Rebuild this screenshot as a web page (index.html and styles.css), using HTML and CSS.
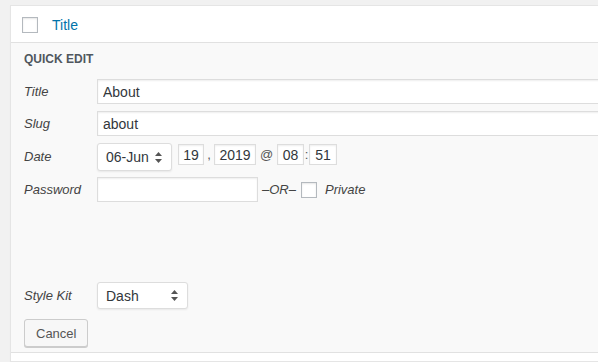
FILE: index.html
```html
<!DOCTYPE html>
<html lang="en">
<head>
    <meta charset="UTF-8">
    <title>Quick Edit</title>
    <link rel="stylesheet" href="styles.css">
</head>
<body>

    <div class="list">

        <div class="list-head">
            <span class="check"></span>
            <a class="col-title" href="#">Title</a>
        </div>

        <div class="quick-edit">
            <div class="legend">Quick Edit</div>

            <div class="field row-title">
                <span class="label">Title</span>
                <input class="text wide" type="text" value="About">
            </div>

            <div class="field row-slug">
                <span class="label">Slug</span>
                <input class="text wide" type="text" value="about">
            </div>

            <div class="field row-date">
                <span class="label">Date</span>
                <div class="select month">
                    <span>06-Jun</span>
                    <svg class="arrows" width="7" height="11" viewBox="0 0 7 11"><path d="M3.5 0 L7 4 L0 4 Z M0 7 L7 7 L3.5 11 Z" fill="#555"/></svg>
                </div>
                <div class="date-parts">
                    <input class="text small day" type="text" value="19">
                    <span class="sep">,</span>
                    <input class="text small year" type="text" value="2019">
                    <span class="sep at">@</span>
                    <input class="text small hour" type="text" value="08">
                    <span class="sep colon">:</span>
                    <input class="text small minute" type="text" value="51">
                </div>
            </div>

            <div class="field row-password">
                <span class="label">Password</span>
                <input class="text password" type="text" value="">
                <span class="or">&ndash;OR&ndash;</span>
                <span class="check private-check"></span>
                <span class="private">Private</span>
            </div>

            <div class="field row-kit">
                <span class="label">Style Kit</span>
                <div class="select kit">
                    <span>Dash</span>
                    <svg class="arrows" width="7" height="11" viewBox="0 0 7 11"><path d="M3.5 0 L7 4 L0 4 Z M0 7 L7 7 L3.5 11 Z" fill="#555"/></svg>
                </div>
            </div>

            <div class="actions">
                <button class="button">Cancel</button>
            </div>
        </div>

        <div class="list-foot"></div>
    </div>

</body>
</html>
```

FILE: styles.css
```css
* {
    margin: 0;
    padding: 0;
    box-sizing: border-box;
    font-family: 'Liberation Sans', Arial, sans-serif;
}

html, body {
    overflow: hidden;
}

body {
    background: #f1f1f1;
    color: #444;
    font-size: 13px;
}

.list {
    width: 820px;
    margin: 5px 0 0 10px;
    border: 1px solid #e5e5e5;
    box-shadow: 0 1px 1px rgba(0, 0, 0, 0.04);
    background: #fff;
}

/* header row */

.list-head {
    height: 37px;
    padding: 11px 0 0 11px;
    display: flex;
    align-items: flex-start;
    background: #fff;
    border-bottom: 1px solid #e1e1e1;
}

.check {
    display: inline-block;
    width: 16px;
    height: 16px;
    border: 1px solid #b4b9be;
    background: #fff;
    box-shadow: inset 0 1px 2px rgba(0, 0, 0, 0.1);
}

.col-title {
    margin-left: 14px;
    color: #0073aa;
    font-size: 14px;
    line-height: 16px;
    text-decoration: none;
}

/* quick edit panel */

.quick-edit {
    background: #f9f9f9;
    padding: 8px 0 5px 13px;
    border-bottom: 1px solid #e1e1e1;
}

.legend {
    font-size: 12px;
    font-weight: bold;
    line-height: 16px;
    text-transform: uppercase;
    color: #50575e;
}

.field {
    display: flex;
    align-items: center;
}

.label {
    width: 73px;
    flex-shrink: 0;
    font-style: italic;
    font-size: 13px;
    color: #444;
}

.row-title { margin-top: 12px; }
.row-slug { margin-top: 7px; }
.row-date { margin-top: 7px; align-items: flex-start; }
.row-date .label { line-height: 28px; }
.row-password { margin-top: 6px; }
.row-kit { margin-top: 80px; }

.text {
    height: 25px;
    padding: 0 5px;
    border: 1px solid #ddd;
    background: #fff;
    box-shadow: inset 0 1px 2px rgba(0, 0, 0, 0.07);
    color: #32373c;
    font-size: 14px;
    outline: none;
}

.wide {
    flex: 1;
    margin-right: 40px;
}

.select {
    display: flex;
    align-items: center;
    justify-content: space-between;
    height: 28px;
    padding: 0 9px 0 8px;
    border: 1px solid #ddd;
    border-radius: 3px;
    background: #fff;
    box-shadow: 0 1px 2px rgba(0, 0, 0, 0.07);
    color: #32373c;
    font-size: 14px;
}

.month { width: 75px; }
.kit { width: 91px; height: 27px; }

.date-parts {
    display: flex;
    align-items: center;
    margin: 1px 0 0 6px;
}

.small {
    height: 21px;
    padding: 0;
    text-align: center;
}

.day { width: 26px; }
.year { width: 42px; }
.hour { width: 27px; }
.minute { width: 28px; }

.sep {
    width: 10px;
    text-align: center;
    font-size: 13px;
    color: #555;
}

.sep.at { width: 21px; }
.sep.colon { width: 5px; }

.password { width: 161px; }

.or {
    margin-left: 4px;
    font-style: italic;
    font-size: 13px;
    color: #444;
}

.private-check {
    margin-left: 5px;
}

.private {
    margin-left: 8px;
    font-style: italic;
    font-size: 13px;
    color: #444;
}

.actions {
    margin-top: 10px;
}

.button {
    height: 28px;
    padding: 0 11px;
    border: 1px solid #ccc;
    border-radius: 3px;
    background: #f7f7f7;
    box-shadow: 0 1px 0 #ccc;
    color: #555;
    font-size: 13px;
}

.list-foot {
    height: 8px;
    background: #fff;
}
```
